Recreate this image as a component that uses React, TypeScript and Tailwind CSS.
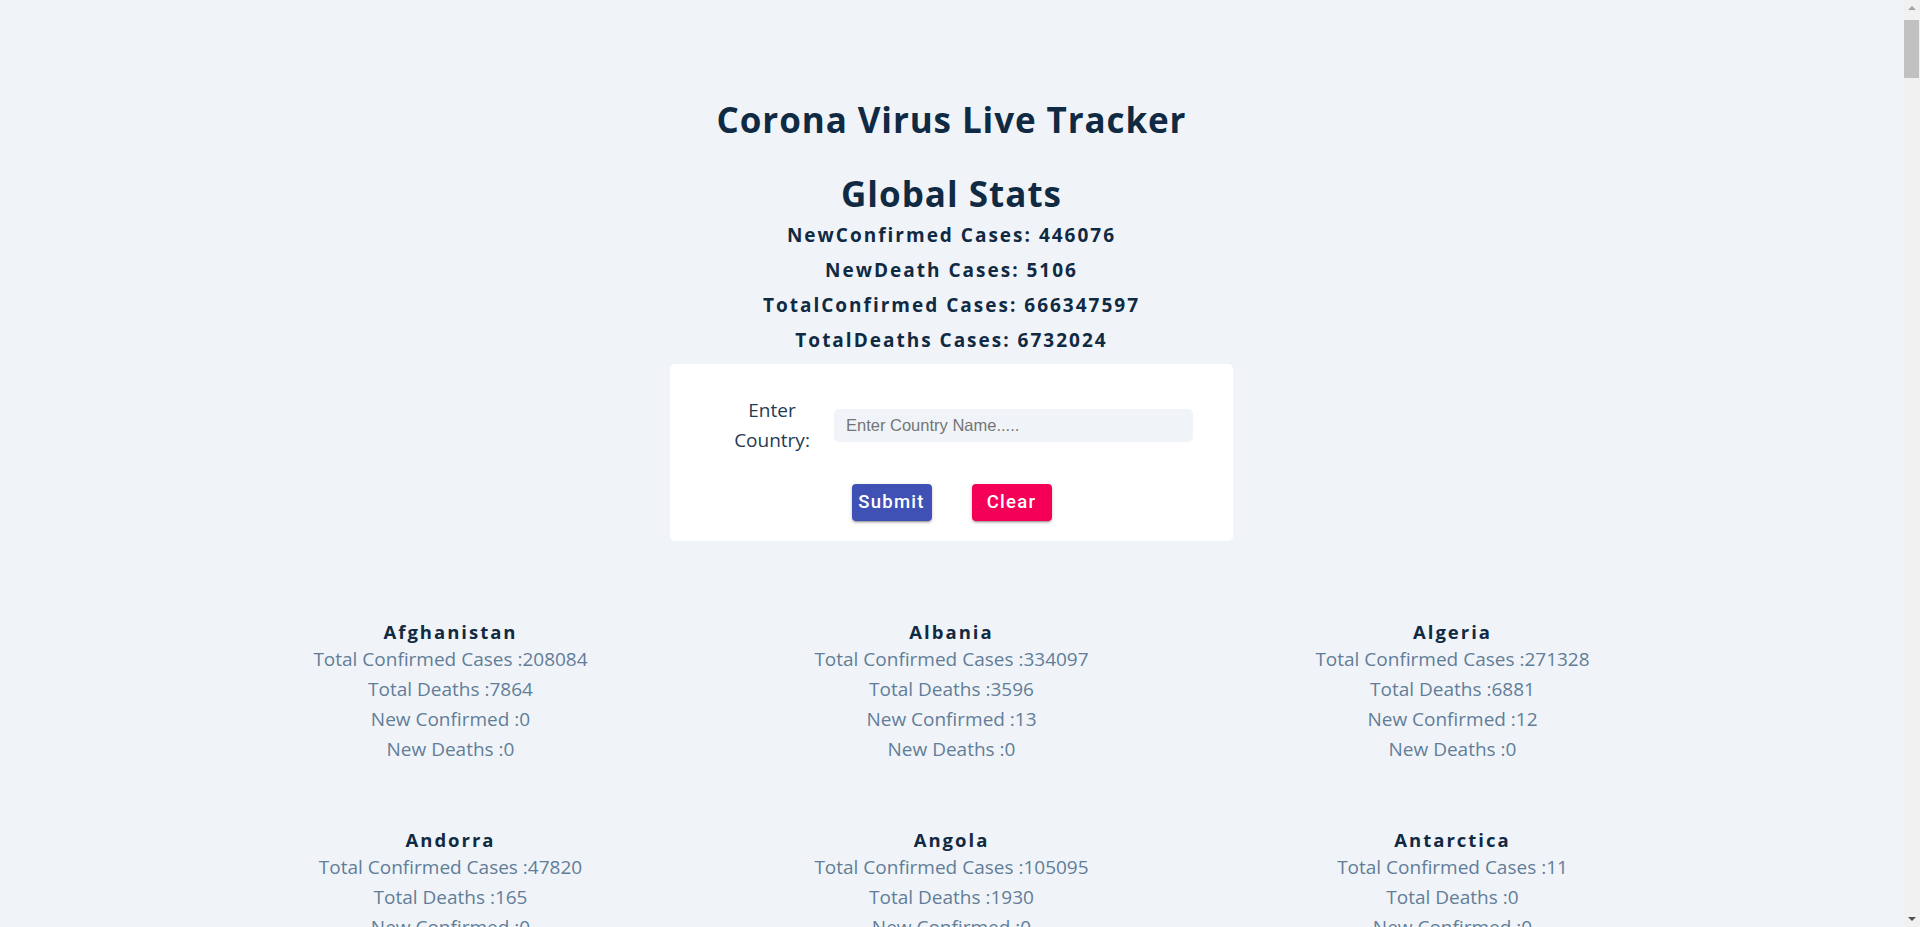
import { useState } from "react";

type Country = [string, number, number, number, number];

// name, total confirmed, total deaths, new confirmed, new deaths
const COUNTRIES: Country[] = [
  ["Afghanistan", 208084, 7864, 0, 0],
  ["Albania", 334097, 3596, 13, 0],
  ["Algeria", 271328, 6881, 12, 0],
  ["Andorra", 47820, 165, 0, 0],
  ["Angola", 105095, 1930, 0, 0],
  ["Antarctica", 11, 0, 0, 0],
  ["Antigua and Barbuda", 9106, 146, 0, 0],
  ["Argentina", 10044957, 130472, 0, 0],
  ["Armenia", 446385, 8719, 21, 0],
  ["Australia", 11235020, 17994, 0, 0],
  ["Austria", 5740325, 21671, 1104, 6],
  ["Azerbaijan", 826617, 10100, 0, 0],
  ["Bahamas", 37491, 833, 0, 0],
  ["Bahrain", 705949, 1543, 0, 0],
  ["Bangladesh", 2037811, 29438, 5, 0],
  ["Barbados", 106336, 574, 0, 0],
  ["Belarus", 994037, 7118, 0, 0],
  ["Belgium", 4691499, 33313, 0, 0],
  ["Belize", 70782, 688, 0, 0],
  ["Benin", 27999, 163, 0, 0],
  ["Bhutan", 62573, 21, 0, 0],
  ["Bolivia", 1189434, 22338, 0, 0],
  ["Bosnia and Herzegovina", 401461, 16263, 25, 1],
  ["Botswana", 329862, 2797, 0, 0],
  ["Brazil", 36754395, 696603, 0, 0],
  ["Brunei", 279375, 225, 0, 0],
  ["Bulgaria", 1295524, 38136, 92, 3],
  ["Burkina Faso", 22056, 396, 0, 0],
  ["Burma", 633774, 19490, 3, 0],
  ["Burundi", 53607, 38, 0, 0],
  ["Cabo Verde", 63265, 413, 0, 0],
  ["Cambodia", 138719, 3056, 0, 0],
  ["Cameroon", 124392, 1965, 0, 0],
  ["Canada", 4570123, 50920, 0, 0],
  ["Central African Republic", 15367, 113, 0, 0],
  ["Chad", 7651, 194, 0, 0],
  ["Chile", 5180402, 64104, 0, 0],
  ["China", 4903524, 101054, 0, 0],
  ["Colombia", 6362618, 142727, 0, 0],
  ["Comoros", 9109, 160, 0, 0],
  ["Congo (Brazzaville)", 25195, 386, 0, 0],
  ["Costa Rica", 1199297, 9158, 0, 0],
  ["Croatia", 1271409, 17947, 86, 4],
  ["Cuba", 1112435, 8530, 0, 0],
  ["Cyprus", 650685, 1364, 0, 0],
  ["Czechia", 4590229, 42224, 411, 5],
  ["Denmark", 3402530, 8064, 0, 0],
  ["Djibouti", 15690, 189, 0, 0],
  ["Dominica", 15760, 74, 0, 0],
  ["Dominican Republic", 660230, 4384, 0, 0],
  ["Ecuador", 1052683, 36014, 0, 0],
  ["Egypt", 515645, 24805, 0, 0],
  ["El Salvador", 201785, 4230, 0, 0],
  ["Equatorial Guinea", 17229, 183, 0, 0],
  ["Eritrea", 10189, 103, 0, 0],
  ["Estonia", 610682, 2833, 0, 0],
  ["Eswatini", 74670, 1422, 0, 0],
  ["Ethiopia", 499706, 7572, 0, 0],
  ["Fiji", 68848, 878, 0, 0],
  ["Finland", 1459617, 8498, 0, 0],
];

const GLOBAL = [
  ["NewConfirmed Cases", 446076],
  ["NewDeath Cases", 5106],
  ["TotalConfirmed Cases", 666347597],
  ["TotalDeaths Cases", 6732024],
];

const BTN_SHADOW =
  "shadow-[0_3px_1px_-2px_rgba(0,0,0,0.2),0_2px_2px_0_rgba(0,0,0,0.14),0_1px_5px_0_rgba(0,0,0,0.12)]";

function Scrollbar() {
  return (
    <div className="fixed top-0 right-0 flex h-screen w-[17px] flex-col items-center bg-[#f1f1f1]">
      <div className="mt-[6px] h-0 w-0 border-x-[4px] border-b-[4px] border-x-transparent border-b-[#a3a3a3]" />
      <div className="mt-[10px] h-[58px] w-[15px] bg-[#c1c1c1]" />
      <div className="mt-auto mb-[6px] h-0 w-0 border-x-[4px] border-t-[4px] border-x-transparent border-t-[#505050]" />
    </div>
  );
}

export default function App() {
  const [query, setQuery] = useState("");
  const [filter, setFilter] = useState("");

  const shown = filter
    ? COUNTRIES.filter((c) => c[0].toLowerCase().includes(filter.toLowerCase()))
    : COUNTRIES;

  return (
    <div className="min-h-screen bg-[#f0f4f8] pr-[17px] pb-16 font-['Segoe_UI','Open_Sans',sans-serif] text-[#102a43]">
      <header className="pt-[96px] text-center">
        <h1 className="text-[35px] leading-[48px] font-bold tracking-[0.9px]">Corona Virus Live Tracker</h1>
        <h2 className="mt-[26px] text-[35px] leading-[48px] font-bold tracking-[1px]">Global Stats</h2>
        {GLOBAL.map(([label, value]) => (
          <h4 key={label} className="text-[19px] leading-[35px] font-bold tracking-[2px]">
            {label}: {value}
          </h4>
        ))}
      </header>

      {/* search card */}
      <form
        className="mx-auto mt-[6px] w-[563px] rounded-[5px] bg-white px-[40px] pt-[31px] pb-[20px]"
        onSubmit={(e) => {
          e.preventDefault();
          setFilter(query);
        }}
      >
        <div className="flex items-center">
          <label htmlFor="country" className="w-[124px] shrink-0 text-center text-[19px] leading-[30px] text-[#243b53]">
            Enter Country:
          </label>
          <input
            id="country"
            value={query}
            onChange={(e) => setQuery(e.target.value)}
            placeholder="Enter Country Name....."
            className="h-[33px] flex-1 rounded-[5px] bg-[#f0f4f8] px-[12px] font-['Liberation_Sans',Arial,sans-serif] text-[16.5px] text-[#102a43] outline-none placeholder:text-[#757575]"
          />
        </div>
        <div className="mt-[29px] flex justify-center gap-[40px]">
          <button
            type="submit"
            className={`h-[37px] w-[80px] rounded-[4px] bg-[#3f51b5] font-['Roboto',sans-serif] text-[18.5px] font-medium tracking-[1.3px] text-white ${BTN_SHADOW}`}
          >
            Submit
          </button>
          <button
            type="button"
            onClick={() => {
              setQuery("");
              setFilter("");
            }}
            className={`h-[37px] w-[80px] rounded-[4px] bg-[#f50057] font-['Roboto',sans-serif] text-[18.5px] font-medium tracking-[1.3px] text-white ${BTN_SHADOW}`}
          >
            Clear
          </button>
        </div>
      </form>

      <div className="mx-auto mt-[47px] grid max-w-[1503px] grid-cols-3">
        {shown.map(([name, total, deaths, newConf, newDeaths]) => (
          <div key={name} className="py-[32px] text-center">
            <h3 className="text-[18.5px] leading-[24px] font-bold tracking-[2px] text-[#102a43]">{name}</h3>
            <div className="text-[19px] leading-[30px] text-[#627d98]">
              <p>Total Confirmed Cases :{total}</p>
              <p>Total Deaths :{deaths}</p>
              <p>New Confirmed :{newConf}</p>
              <p>New Deaths :{newDeaths}</p>
            </div>
          </div>
        ))}
      </div>

      <Scrollbar />
    </div>
  );
}
